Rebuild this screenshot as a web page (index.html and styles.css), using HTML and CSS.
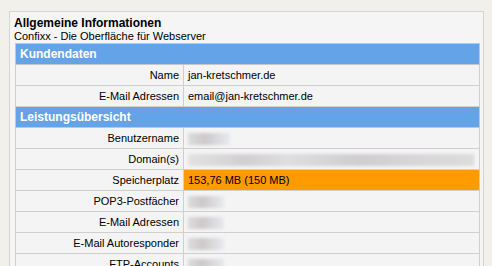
FILE: index.html
```html
<!DOCTYPE html>
<html lang="de">
<head>
    <meta charset="UTF-8">
    <title>Confixx</title>
<link rel="stylesheet" href="styles.css">
</head>
<body>
    <div class="panel">
        <div class="title">Allgemeine Informationen</div>
        <div class="subtitle">Confixx - Die Oberfläche für Webserver</div>
        <table class="info">
            <tr class="head"><td colspan="2">Kundendaten</td></tr>
            <tr><td class="label">Name</td><td class="value">jan-kretschmer.de</td></tr>
            <tr><td class="label">E-Mail Adressen</td><td class="value">email@jan-kretschmer.de</td></tr>
            <tr class="head"><td colspan="2">Leistungsübersicht</td></tr>
            <tr><td class="label">Benutzername</td><td class="value"><span class="hidden w-user"></span></td></tr>
            <tr><td class="label">Domain(s)</td><td class="value"><span class="hidden w-domain"></span></td></tr>
            <tr><td class="label">Speicherplatz</td><td class="value warn">153,76 MB (150 MB)</td></tr>
            <tr><td class="label">POP3-Postfächer</td><td class="value"><span class="hidden w-small"></span></td></tr>
            <tr><td class="label">E-Mail Adressen</td><td class="value"><span class="hidden w-small"></span></td></tr>
            <tr><td class="label">E-Mail Autoresponder</td><td class="value"><span class="hidden w-small"></span></td></tr>
            <tr><td class="label">FTP-Accounts</td><td class="value"><span class="hidden w-small"></span></td></tr>
        </table>
    </div>
</body>
</html>
```

FILE: styles.css
```css
* {
    box-sizing: border-box;
}
body {
    margin: 0;
    height: 266px;
    overflow: hidden;
    background: #f1f0eb;
    font-family: "Liberation Sans", Arial, sans-serif;
    font-size: 11px;
    color: #000;
}
.panel {
    margin: 11px 0 0 9px;
    width: 475px;
    padding: 5px 5px 0 4px;
    background: #f5f5f5;
    border: 1px solid #d4d4d4;
    height: 300px;
}
.title {
    font-weight: bold;
    font-size: 12px;
    line-height: 13px;
}
.subtitle {
    line-height: 13px;
    margin-bottom: 0;
}
.info {
    margin-left: 1px;
    width: 465px;
    border-collapse: collapse;
    border: 1px solid #c6c6c6;
}
.info td {
    height: 21px;
    padding: 0 4px;
    border: 1px solid #cfcfcf;
    background: #f4f4f4;
}
.info .head td {
    background: #64a3e8;
    color: #fff;
    font-weight: bold;
    font-size: 12px;
    padding-left: 4px;
    border-color: #c6c6c6;
}
.info .label {
    width: 168px;
    text-align: right;
}
.info .value.warn {
    background: #ff9a00;
}
.hidden {
    display: inline-block;
    height: 12px;
    vertical-align: middle;
    background: linear-gradient(90deg, #dcdcdc, #cdc8cb 40%, #dad9dc 70%, #e6eaee);
    filter: blur(1.5px);
}
.w-user {
    width: 42px;
}
.w-domain {
    width: 286px;
    background: linear-gradient(90deg, #e2e2e2, #d2cfd2 20%, #dedddf 35%, #cfcdcf 60%, #d8d6d8 80%, #dcdcdc);
}
.w-small {
    width: 36px;
}
```
